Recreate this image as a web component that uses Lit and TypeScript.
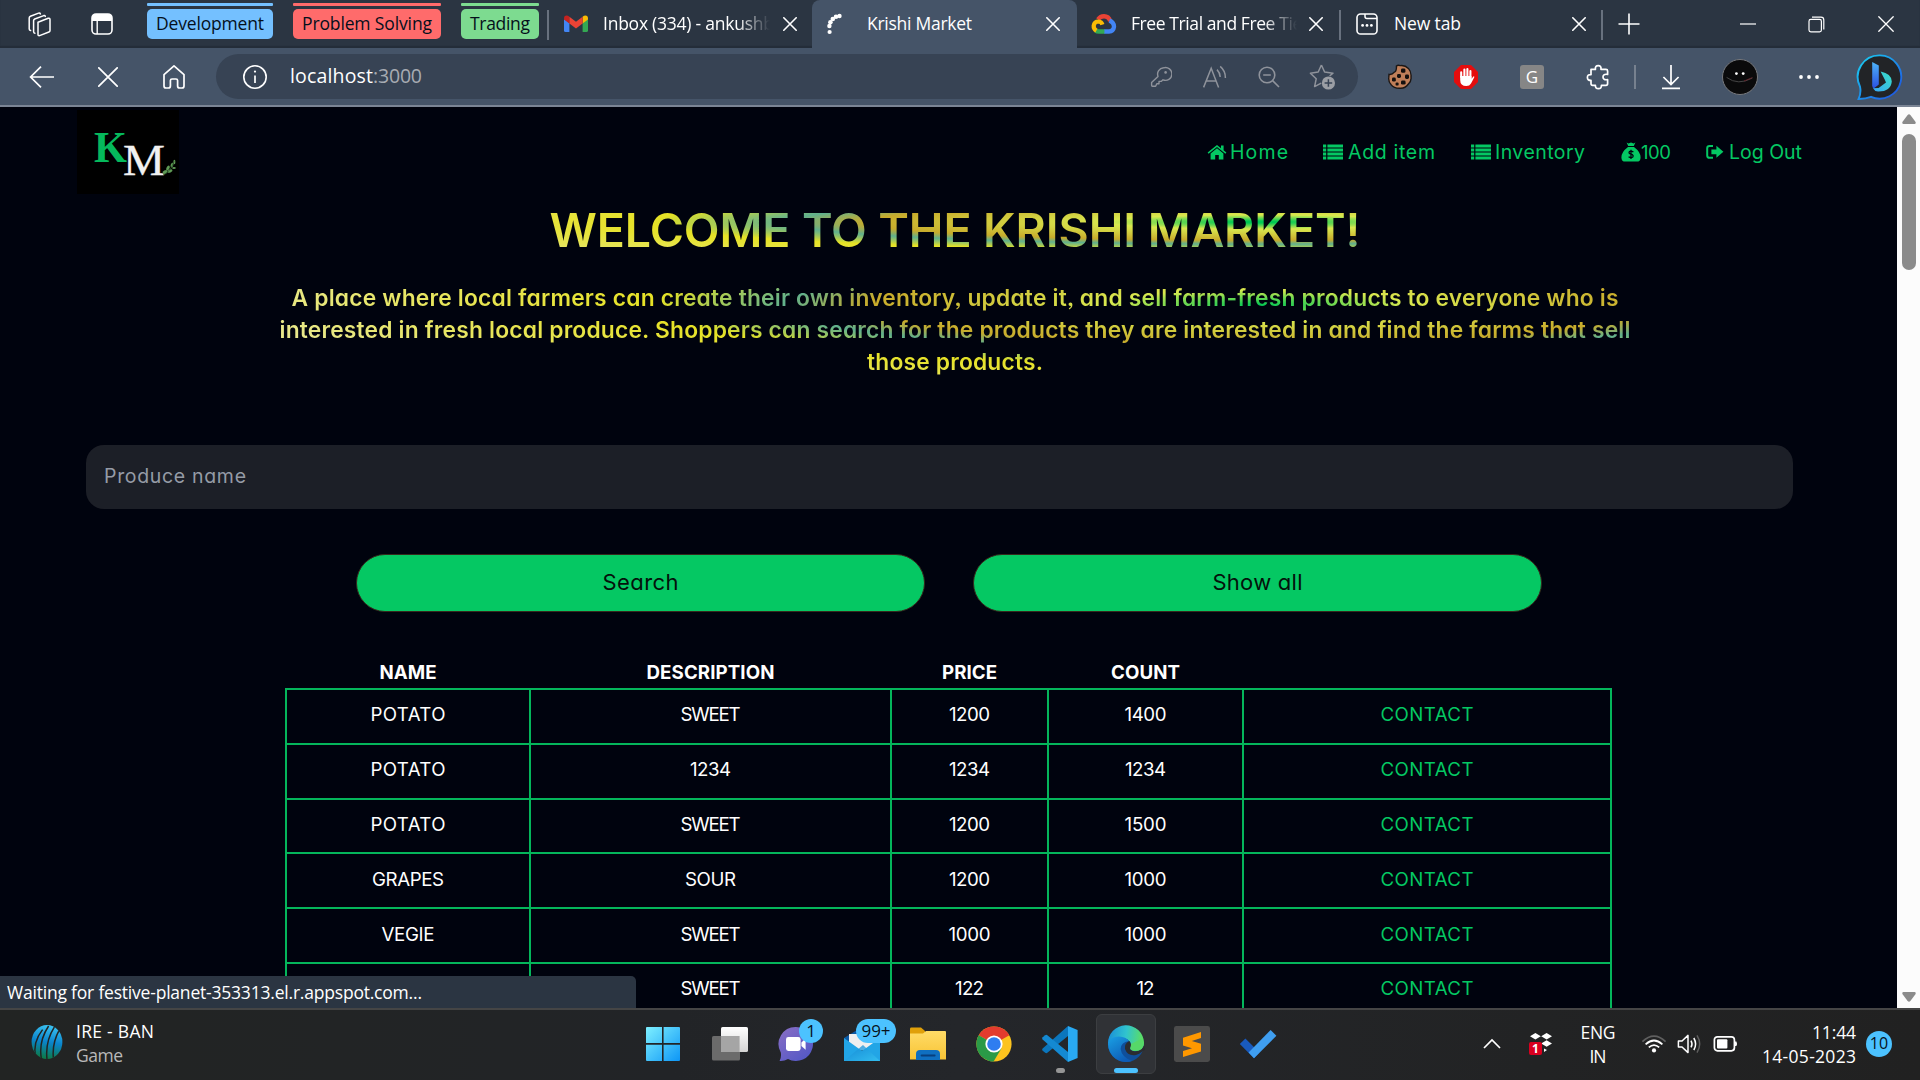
import { LitElement, html, css, svg, TemplateResult } from "lit";
import { customElement } from "lit/decorators.js";

/** Wraps an svg body; every icon is drawn in its own pixel grid. */
const icon = (w: number, h: number, body: TemplateResult | unknown) =>
  html`<svg class="ic" width=${w} height=${h} viewBox="0 0 ${w} ${h}" fill="none">${body}</svg>`;

/** A run of text that is tracked to a known advance width. */
const run = (text: string, width: number, cls = "") =>
  html`<span class="run ${cls}" data-w=${width}>${text}</span>`;

const workspaces = icon(26, 26, svg`<g stroke="#fff" stroke-width="1.5" stroke-linejoin="round" stroke-linecap="round">
  <path d="M12 11.2 22.2 7.3Q24 6.8 24 8.6V19.4Q24 20.6 22.9 21L13.6 24.6Q12 25 12 23.4Z"/>
  <path d="M8.9 22.3Q7.6 22.3 7.6 20.6V9.6Q7.6 8.5 8.7 8L17.8 4.6Q19 4.3 19.3 5.4"/>
  <path d="M4.6 19.6Q3.2 19.4 3.2 18V7Q3.2 5.8 4.4 5.3L12.6 2.1Q14 1.7 14.4 2.9"/></g>`);
const tabPanel = icon(24, 24, svg`<rect x="2" y="2" width="20" height="20" rx="4" stroke="#fff" stroke-width="1.6"/>
  <path d="M2 9V6Q2 2 6 2H18Q22 2 22 6V9Z" fill="#fff"/><path d="M7.2 8V22" stroke="#fff" stroke-width="1.4"/>`);
const gmail = icon(24, 18, svg`<path d="M0 4V15.5Q0 17 1.6 17H5.4V8Z" fill="#4285f4"/>
  <path d="M24 4V15.5Q24 17 22.4 17H18.6V8Z" fill="#34a853"/>
  <path d="M0 3.5Q0 .5 2.6.5 4 .5 5.4 1.8V8.6L0 4.6Z" fill="#c5221f"/>
  <path d="M24 3.5Q24 .5 21.4.5 20 .5 18.6 1.8V8.6L24 4.6Z" fill="#fbbc04"/>
  <path d="M5.4 1.8 12 6.8 18.6 1.8V8.6L12 13.6 5.4 8.6Z" fill="#ea4335"/>`);
const cloud = icon(26, 20, svg`<path d="M7 5.6Q9.3 2.2 13 2.2 17.6 2.2 19.2 7" stroke="#ea4335" stroke-width="4.4"/>
  <path d="M18.4 6.6Q23 8.2 23 12.8 22.4 17.4 18 17.5H13" stroke="#4285f4" stroke-width="4.4"/>
  <path d="M13.4 17.5H8Q5.8 17.5 4.6 16.5" stroke="#34a853" stroke-width="4.4"/>
  <path d="M5.4 16.6Q2.4 14.8 2.7 11.6 3.4 7.4 7.6 7.5 10.6 7.8 11.4 10.6" stroke="#fbbc04" stroke-width="4.2"/>`);
const spinner = icon(20, 24, svg`<g fill="#fff"><circle cx="14.5" cy="4" r="2.2"/><circle cx="11" cy="4.8" r="2.3"/>
  <circle cx="7.8" cy="7" r="2.3"/><circle cx="5.4" cy="10.2" r="2.3"/><circle cx="4.4" cy="14" r="2.2"/><circle cx="4.6" cy="20" r="2.1"/></g>`);
const newTab = icon(24, 24, svg`<rect x="2" y="2" width="20" height="20" rx="3.6" stroke="#fff" stroke-width="1.6"/>
  <path d="M10 2V4.4Q10 6.4 12 6.4H22" stroke="#fff" stroke-width="1.5"/><g fill="#fff"><circle cx="7.6" cy="13.4" r="1.4"/><circle cx="12" cy="13.4" r="1.4"/><circle cx="16.4" cy="13.4" r="1.4"/></g>`);
const cross = (s: number, w: number) => icon(s, s, svg`<path d="M.8.8 ${s - .8} ${s - .8}M${s - .8}.8 .8 ${s - .8}" stroke="#fff" stroke-width=${w} stroke-linecap="round"/>`);
const plus = icon(22, 22, svg`<path d="M11 .5V21.5M.5 11H21.5" stroke="#fff" stroke-width="1.6"/>`);
const minimise = icon(16, 16, svg`<path d="M0 8H16" stroke="#fff" stroke-width="1.2"/>`);
const restore = icon(17, 17, svg`<rect x="1" y="3.4" width="12.4" height="12.4" rx="1.8" stroke="#fff" stroke-width="1.2"/>
  <path d="M4 1.2H13Q15.8 1.2 15.8 4V13.4" stroke="#fff" stroke-width="1.2"/>`);

const back = icon(26, 24, svg`<path d="M25 12H2M12 1.6 1.6 12 12 22.4" stroke="#fff" stroke-width="1.7"/>`);
const home = icon(24, 26, svg`<path d="M2 10.6 12 1.8 22 10.6V22Q22 24 20 24H17.6Q15.6 24 15.6 22V16.6Q15.6 15 14 15H10Q8.4 15 8.4 16.6V22Q8.4 24 6.4 24H4Q2 24 2 22Z" stroke="#fff" stroke-width="1.7" stroke-linejoin="round"/>`);
const info = icon(26, 26, svg`<circle cx="13" cy="13" r="11.2" stroke="#fff" stroke-width="1.6"/><path d="M13 11.4V19" stroke="#fff" stroke-width="1.7"/><circle cx="13" cy="7.6" r="1.1" fill="#fff"/>`);
const key = icon(22, 22, svg`<path d="M13.6 1.8A6.4 6.4 0 1 1 13 13.8L11.2 15.4H9V17.8H6.8L5.6 20.2H2.4Q1.6 20.2 1.6 19.2V16.6L8 10.4A6.4 6.4 0 0 1 13.6 1.8Z" stroke="#8f939b" stroke-width="1.4" stroke-linejoin="round"/><circle cx="15.6" cy="6.4" r="1.3" fill="#8f939b"/>`);
const readAloud = icon(26, 24, svg`<g stroke="#8f939b" stroke-width="1.5"><path d="M1.6 22.4 9.2 3.2 16.6 22.4M4.2 16H14"/><path d="M15 4.6Q18 7.6 18.2 12M18.2 1.4Q23.6 6 23.4 13"/></g>`);
const zoomOut = icon(24, 24, svg`<g stroke="#8f939b" stroke-width="1.6"><circle cx="10" cy="10" r="7.8"/><path d="M6.2 10H13.8M15.6 15.6 22 22"/></g>`);
const star = icon(28, 27, svg`<path d="M12.4 2 15.6 9 24 10.2 20.6 13M12.4 2 9.2 9 1.4 10.2 7.2 15.8 5.6 23.6 12.2 20.2" stroke="#8f939b" stroke-width="1.5" stroke-linejoin="round"/>
  <circle cx="19.4" cy="20" r="6.6" fill="#9b9ea4"/><path d="M19.4 16.2V23.8M15.6 20H23.2" stroke="#374354" stroke-width="1.5"/>`);
const cookie = icon(26, 26, svg`<path d="M9.4 2Q11 .6 13.4 1.6 18 1 21.4 4.4 24.6 8 24 13 24.6 17 21.4 20 18 24.6 13 24.2 7 24.4 4 20.6 1.2 17.6 1.8 13.4L2 10.4Q5.4 10.8 7 8.4 9.8 7.6 9.4 2Z" fill="#c07f59" stroke="#1c1715" stroke-width="1.4"/>
  <g fill="#15100e"><rect x="14" y="4.4" width="4.4" height="4.4" rx="1.4"/><rect x="10" y="10" width="4" height="4" rx="1.4"/><rect x="18" y="10.4" width="4" height="4.6" rx="1.4"/><rect x="5" y="13.6" width="3.8" height="4" rx="1.4"/><rect x="14" y="16.6" width="4.6" height="4" rx="1.4"/><rect x="8.6" y="18.4" width="3" height="3.2" rx="1.2"/></g>`);
const stopHand = icon(26, 26, svg`<path d="M8 1H18L25 8V18L18 25H8L1 18V8Z" fill="#e40d0d"/>
  <path d="M8.2 8.2V13M11.4 5.6V13M14.4 5V13M17.4 7V14" stroke="#fff" stroke-width="2.1" stroke-linecap="round"/>
  <path d="M7.2 12H18.5V14.8L20.4 12.4Q21.6 12 21.2 13.4L18 19.4Q16.6 22 13.4 22 7.2 22 7.2 16Z" fill="#fff"/>`);
const puzzle = icon(24, 26, svg`<path d="M5 5.4H9.4Q9 1.6 12.2 1.6 15.4 1.6 15 5.4H20Q21.6 5.4 21.6 7V10.4Q17 9.6 17 13 17 16.4 21.6 15.6V19.6Q21.6 21.4 20 21.4H15.4Q15.6 24.6 12.4 24.6 9.2 24.6 9.4 21.4H6.6Q5 21.4 5 19.8V16.4Q1.4 16.6 1.4 13.4 1.4 10.4 5 10.6Z" stroke="#fff" stroke-width="1.7" stroke-linejoin="round"/>`);
const download = icon(20, 26, svg`<path d="M10 1V20M2.4 13 10 20.6 17.6 13M1 24.4H19" stroke="#fff" stroke-width="1.7"/>`);
const avatar = icon(36, 36, svg`<circle cx="18" cy="18" r="17.5" fill="#0a0a0b" stroke="#77797d"/><circle cx="14.4" cy="14.6" r="1.4" fill="#fff"/><circle cx="21.2" cy="14.6" r="1.4" fill="#fff"/>
  <path d="M4.6 18.4Q16 27 30.4 19" stroke="#4c4c4c" stroke-width=".9"/><path d="M22 22 30.4 18.6" stroke="#6c2229" stroke-width=".8"/>`);
const dots = icon(22, 6, svg`<g fill="#fff"><circle cx="3" cy="3" r="1.9"/><circle cx="11" cy="3" r="1.9"/><circle cx="19" cy="3" r="1.9"/></g>`);
const bing = icon(48, 48, svg`<defs><linearGradient id="br" x1="0" y1="0" x2="1" y2="1"><stop stop-color="#19d3f2"/><stop offset="1" stop-color="#1f4be0"/></linearGradient>
  <linearGradient id="bb" x1="0" y1="0" x2="0" y2="1"><stop stop-color="#4eb4f8"/><stop offset="1" stop-color="#2a50e2"/></linearGradient>
  <linearGradient id="bc" x1="1" y1="0" x2="0" y2="1"><stop stop-color="#38e0c4"/><stop offset="1" stop-color="#39a7f6"/></linearGradient></defs>
  <path d="M24 2.4A21.6 21.6 0 1 1 15 43.8Q10 45.8 2.6 46Q5.4 39.6 4 33.6A21.6 21.6 0 0 1 24 2.4Z" fill="#222427" stroke="url(#br)" stroke-width="1.9"/>
  <path d="M16.2 9 22.8 12.4V31.4L17.6 35.4Q16.2 34.6 16.2 32.4Z" fill="url(#bb)"/>
  <path d="M24.6 18.4Q35.6 20.4 35.8 28.6 34.8 38.8 22 38.6 18.4 38 17 35.2L22.6 35 30 29.6 28.6 26.2Z" fill="url(#bc)"/>`);

const faHome = icon(20, 16, svg`<path d="M10 1 .6 8.6 1.6 9.8 10 3 18.4 9.8 19.4 8.6 16.6 6.3V1.6H14V4.2Z" fill="#04c863"/><path d="M10 4.2 3.6 9.4V15.4H8.2V11H11.8V15.4H16.4V9.4Z" fill="#04c863"/>`);
const faList = icon(20, 16, svg`<g fill="#04c863"><path d="M0 .6H3.2V3.6H0zM4.4 .6H20V3.6H4.4zM0 4.6H3.2V7.6H0zM4.4 4.6H20V7.6H4.4zM0 8.6H3.2V11.6H0zM4.4 8.6H20V11.6H4.4zM0 12.6H3.2V15.6H0zM4.4 12.6H20V15.6H4.4z"/></g>`);
const faBag = icon(20, 20, svg`<path d="M5.6.6 7.4 1.4 10 .6 12.6 1.4 14.4.6 12.8 4H7.2ZM7 5H13Q19.6 10 19.6 15.4 19.6 19.6 15.6 19.6H4.4Q.4 19.6.4 15.4.4 10 7 5Z" fill="#04c863"/>
  <path d="M12.4 10Q10 8.4 8.4 9.6 7.2 11.6 10 12.2 13 13 11.8 15 10 16.4 7.6 14.8M10 7.8V17" stroke="#00030e" stroke-width="1.3"/>`);
const faOut = icon(18, 16, svg`<path d="M7 1.9H3.6Q1.2 1.9 1.2 4.2V11.4Q1.2 13.8 3.6 13.8H7" stroke="#04c863" stroke-width="2"/><path d="M5.4 5.4H10.4V1.8L17.4 7.8 10.4 13.8V10.2H5.4Z" fill="#04c863"/>`);

const kmLogo = html`<svg class="logo" width="102" height="84" viewBox="0 0 102 84">
  <rect width="102" height="84" fill="#000"/>
  <text x="17" y="52" textLength="33" lengthAdjust="spacingAndGlyphs" font-family="Liberation Serif, serif" font-weight="700" font-size="45" fill="#05b95c">K</text>
  <text x="46" y="64.5" textLength="42" lengthAdjust="spacingAndGlyphs" font-family="Liberation Serif, serif" font-size="45" fill="#f1f1f1" stroke="#f1f1f1" stroke-width=".3">M</text>
  <g fill="#5f9a55"><ellipse cx="88" cy="62" rx="2.6" ry="1.6" transform="rotate(-30 88 62)"/><ellipse cx="91" cy="58" rx="2.6" ry="1.5" transform="rotate(-60 91 58)"/><ellipse cx="93" cy="61" rx="2.6" ry="1.5" transform="rotate(-20 93 61)"/><ellipse cx="95" cy="55" rx="2.4" ry="1.3" transform="rotate(-70 95 55)"/><ellipse cx="97" cy="58" rx="1.8" ry="1.1"/><ellipse cx="97.4" cy="52" rx="1" ry="2.2"/></g>
  <path d="M86 65Q94 62 97 51" stroke="#2f5a2d" stroke-width=".8" fill="none"/></svg>`;

const cricket = icon(32, 36, svg`<defs><linearGradient id="cr" gradientUnits="userSpaceOnUse" x1="20" y1="2" x2="14" y2="34"><stop stop-color="#39c0f0"/><stop offset=".5" stop-color="#0a84cc"/><stop offset="1" stop-color="#0d7a4a"/></linearGradient>
  <clipPath id="cc"><ellipse cx="16" cy="18" rx="15.4" ry="17"/></clipPath></defs>
  <g clip-path="url(#cc)"><rect width="32" height="36" fill="url(#cr)"/>
  <g stroke="#222423" stroke-width="1.5"><path d="M4.6 33Q1.6 18 11.6 5.6"/><path d="M10.6 36Q7 18 17.6 2"/><path d="M16.2 37Q13.6 18 23.6 2.6"/><path d="M22.6 36Q20.4 20 28.6 5.4"/></g></g>`);
const start = icon(36, 36, svg`<defs><linearGradient id="ws" x1="0" y1="0" x2="1" y2="1"><stop stop-color="#7ef0ff"/><stop offset="1" stop-color="#0d96f6"/></linearGradient></defs>
  <path d="M2 1H17V17H1V2Q1 1 2 1ZM18.6 1H34Q35 1 35 2V17H18.6ZM1 18.8H17V35H2Q1 35 1 34ZM18.6 18.8H35V34Q35 35 34 35H18.6Z" fill="url(#ws)"/>`);
const taskView = icon(38, 36, svg`<defs><linearGradient id="tv" x1="0" y1="0" x2="0" y2="1"><stop stop-color="#fff"/><stop offset="1" stop-color="#d4d4d4"/></linearGradient></defs>
  <rect x="1" y="10" width="28" height="24.6" rx="1.6" fill="#6b6b6b"/><rect x="10" y="1" width="27" height="25" rx="1.6" fill="url(#tv)"/><path d="M10 10H28.6V26H11.6Q10 26 10 24.4Z" fill="#a5a5a5"/>`);
const chat = icon(36, 36, svg`<defs><linearGradient id="ch" x1="0" y1="0" x2=".8" y2="1"><stop stop-color="#8a6ec4"/><stop offset="1" stop-color="#5358c6"/></linearGradient></defs>
  <path d="M18 1A17 17 0 1 1 10 33Q6 35.4 1.6 35Q3.6 31 2.8 26.4A17 17 0 0 1 18 1Z" fill="url(#ch)"/><rect x="8" y="11" width="14.6" height="14" rx="2.4" fill="#fff"/><path d="M23.4 16.6 27.6 12.4V23.8L23.4 20Z" fill="#fff"/>`);
const mail = icon(38, 36, svg`<defs><linearGradient id="ml" x1="0" y1="0" x2="1" y2="1"><stop stop-color="#0f7fd0"/><stop offset="1" stop-color="#38c5f2"/></linearGradient></defs>
  <path d="M1 12 19 1 37 12V18H1Z" fill="#0c59a4"/><path d="M6 8H32V24H6Z" fill="#efefef"/><path d="M1 12 19 25 37 12V35H1Z" fill="#22a5e6"/><path d="M1 35 20 19 37 35Z" fill="url(#ml)" opacity=".75"/>`);
const folder = icon(38, 34, svg`<defs><linearGradient id="fo" x1="0" y1="0" x2="0" y2="1"><stop stop-color="#ffdb67"/><stop offset="1" stop-color="#f8c435"/></linearGradient></defs>
  <path d="M1 2Q1 .6 2.4.6H12L16 4V12H1Z" fill="#e0a00a"/><path d="M1 6.6H14L17 4H36Q37 4 37 5V32.6H1Z" fill="url(#fo)"/><path d="M7 33V27Q7 23 11 23H27Q31 23 31 27V33Z" fill="#0f6fc0"/><rect x="11.6" y="27.4" width="15" height="2" rx="1" fill="#083f7c"/>`);
const chrome = icon(36, 36, svg`<circle cx="18" cy="18" r="17.6" fill="#fcc31e"/><path d="M18 18 2.7 9.3A17.6 17.6 0 0 1 33.3 9.3Z" fill="#e33b2e"/>
  <path d="M2.7 9.3A17.6 17.6 0 0 0 17.6 35.6L25.4 22.4 18 18Z" fill="#2a9a47"/><circle cx="18" cy="18" r="8.6" fill="#fff"/><circle cx="18" cy="18" r="6.8" fill="#2f7df0"/>`);
const vscode = icon(38, 38, svg`<path d="M27 1 36.6 5V33L27 37Z" fill="#29a9f2"/><path d="M27 1V11L6 28Q5 28.4 4.2 27.8L1.4 25.4Q.8 24.4 1.6 23.6Z" fill="#0b76bd"/><path d="M27 37V27L6 10Q5 9.6 4.2 10.2L1.4 12.6Q.8 13.6 1.6 14.4Z" fill="#1489d2"/>`);
const edge = icon(38, 38, svg`<defs><linearGradient id="ea" x1="0" y1=".3" x2="1" y2=".4"><stop stop-color="#1a8fd8"/><stop offset=".5" stop-color="#30c3cf"/><stop offset="1" stop-color="#5fe05a"/></linearGradient>
  <linearGradient id="eb" x1="0" y1="0" x2=".6" y2="1"><stop stop-color="#1aa0e4"/><stop offset="1" stop-color="#0d5cb6"/></linearGradient></defs>
  <circle cx="19" cy="19" r="18" fill="#0f4f9b"/><path d="M1 19A18 18 0 0 1 37 17.6Q37 26 28 26 22.4 25.4 23.4 22.6 25.6 18 20.6 14.4 12 10 1 19Z" fill="url(#ea)"/>
  <path d="M1 19Q3 11.6 12 11.6 19 12 22 16 14 17 13.6 24 14.6 32 25 36A18 18 0 0 1 1 19Z" fill="url(#eb)"/><path d="M22.4 16Q17 18.6 18 24 20.6 31.4 29 30 32.6 29 34.6 27Q35.8 26 38 25L37 20Q35 26 28 26.4 22 25.6 23.4 22.6 25 19.6 22.4 16Z" fill="#2b2d30"/><path d="M37 17.6Q37 26 28 26 22.4 25.4 23.4 22.6 24 21 24 19L34 14Z" fill="#56d868"/>`);
const sublime = icon(38, 38, svg`<rect x="1" y="1" width="36" height="36" rx="2.4" fill="#4b4b4b"/><path d="M28 7 10 12.8V20.4L19 23.2 10 26V32L28 26.4V18.8L18.8 16 28 13Z" fill="#ff9800"/>`);
const todo = icon(38, 30, svg`<path d="M6.4 9.4.8 15 15 29.2 20.4 23.4Z" fill="#195abd"/><path d="M9.6 23.6 31.6 1 37.4 6.8 15 29.2Z" fill="#3f9ef0"/>`);

const caret = icon(20, 12, svg`<path d="M2 10 10 2 18 10" stroke="#fff" stroke-width="1.7"/>`);
const dropbox = icon(26, 26, svg`<g fill="#fff"><path d="M7.4 2 12.8 5.2 7.4 8.4 2 5.2ZM18.6 2 24 5.2 18.6 8.4 13.2 5.2ZM18.6 9.2 24 12.6 18.6 15.8 13.2 12.6ZM16 17.6 19 19 16 21Z"/></g><rect x="1" y="11" width="13" height="13" rx="2" fill="#d9001f"/>
  <text x="7.4" y="21.8" text-anchor="middle" font-family="Open Sans, sans-serif" font-weight="700" font-size="12" fill="#fff">1</text>`);
const wifi = icon(26, 20, svg`<g stroke-width="1.7"><path d="M1.4 7.6Q13-3.4 24.6 7.6" stroke="#5f5f5f"/><path d="M4.6 10.4Q13 2.6 21.4 10.4M7.8 13.4Q13 8.8 18.2 13.4" stroke="#fff"/></g><circle cx="13" cy="16.4" r="2.1" fill="#fff"/>`);
const volume = icon(26, 22, svg`<path d="M1.4 8H5L11 2.4V19.6L5 14H1.4Z" stroke="#fff" stroke-width="1.5" stroke-linejoin="round"/><path d="M14 7.6Q16 11 14 14.4M16.8 5Q20.4 11 16.8 17" stroke="#fff" stroke-width="1.5"/><path d="M20 2.4Q25.4 11 20 19.6" stroke="#5f5f5f" stroke-width="1.5"/>`);
const battery = icon(26, 18, svg`<rect x="1.4" y="1.8" width="20" height="14" rx="3" stroke="#fff" stroke-width="1.7"/><rect x="4" y="4.2" width="10.4" height="9.2" rx="1" fill="#fff"/><path d="M22 6.6H23.4Q24.6 8.8 23.4 11H22Z" fill="#fff"/>`);

type Cell = [string, number];
const HEAD: Cell[] = [["NAME", 57], ["DESCRIPTION", 128], ["PRICE", 55], ["COUNT", 69], ["", 0]];
const ROWS: Cell[][] = [
  [["POTATO", 75], ["SWEET", 60], ["1200", 41], ["1400", 42]],
  [["POTATO", 75], ["1234", 41], ["1234", 41], ["1234", 41]],
  [["POTATO", 75], ["SWEET", 60], ["1200", 41], ["1500", 42]],
  [["GRAPES", 72], ["SOUR", 51], ["1200", 41], ["1000", 42]],
  [["VEGIE", 53], ["SWEET", 60], ["1000", 42], ["1000", 42]],
  [["", 0], ["SWEET", 60], ["122", 29], ["12", 18]],
];

@customElement("app-root")
export class AppRoot extends LitElement {
  static styles = css`
    :host { display: block; width: 1920px; height: 1080px; overflow: hidden; font-family: "Open Sans", "Noto Sans", sans-serif; font-size: 17.5px; color: #fff; background: #00030e; }
    * { box-sizing: border-box; }
    .ic, .logo { display: block; flex: none; }
    .run { white-space: nowrap; display: inline-block; }
    .screen { display: flex; flex-direction: column; height: 1080px; }

    .tabs { height: 48px; flex: none; background: #2b3542; display: flex; align-items: stretch; box-shadow: inset 0 -2px 1px #242d39; }
    .cell { display: flex; align-items: center; justify-content: center; flex: none; }
    .work { width: 52px; padding-left: 26px; justify-content: flex-start; }
    .pane { width: 95px; padding-left: 38px; justify-content: flex-start; }
    .group { flex: none; height: 39px; display: flex; flex-direction: column; gap: 3px; padding-top: 3px; margin-right: 20px; color: #05101c; }
    .group .line { height: 3px; border-radius: 1px; background: currentColor; }
    .group .pill { height: 30px; border-radius: 5px; display: flex; justify-content: center; align-items: center; line-height: 24px; padding-bottom: 2px; }
    .blue { width: 126px; } .blue .line, .blue .pill { background: #74c0ff; }
    .red { width: 148px; } .red .line, .red .pill { background: #ff6b6b; }
    .green { width: 78px; margin-right: 8px; } .green .line, .green .pill { background: #7ddb90; }
    .sep { flex: none; width: 2px; height: 30px; margin-top: 10px; background: #68717e; }
    .tab { flex: none; display: flex; align-items: center; height: 48px; }
    .tab .label { flex: none; overflow: hidden; white-space: nowrap; line-height: 28px; padding-bottom: 2px; }
    .fade { -webkit-mask-image: linear-gradient(90deg, #000 80%, transparent 100%); mask-image: linear-gradient(90deg, #000 80%, transparent 100%); }
    .t1 { width: 263px; padding-left: 15px; } .t1 .label { width: 167px; margin: 0 13px 0 15px; }
    .t2 { width: 265px; padding-left: 13px; background: #455468; border-radius: 8px 8px 0 0; } .t2 .label { width: 160px; margin: 0 19px 0 22px; }
    .t3 { width: 262px; padding-left: 14px; } .t3 .label { width: 166px; margin: 0 12px 0 14px; }
    .t4 { width: 260px; padding-left: 14px; } .t4 .label { width: 165px; margin: 0 13px 0 15px; }
    .add { width: 52px; }
    .controls { margin-left: auto; display: flex; padding-right: 0; }
    .controls .cell { width: 69px; }

    .bar { height: 59px; flex: none; background: #455468; border-bottom: 2px solid #7b8595; display: flex; align-items: center; padding: 0 8px 0 9px; }
    .bar .cell { width: 66px; height: 48px; }
    .address { flex: none; width: 1142px; height: 45px; margin: 0 9px; border-radius: 23px; background: #374354; display: flex; align-items: center; padding: 0 8px 0 26px; font-size: 19.5px; }
    .address .host { margin-left: 22px; flex: 1; line-height: 28px; padding-bottom: 1px; white-space: nowrap; }
    .address .cell { width: 54px; }
    .dim { color: #a7abb2; }
    .g { width: 24px; height: 24px; border-radius: 3px; background: #868686; font-size: 17px; line-height: 23px; text-align: center; }
    .rule { width: 2px; height: 24px; background: #77818f; margin: 0 2px 0 3px; }
    .right { display: flex; gap: 3px; align-items: center; }
    .right .cell:last-child { padding-left: 4px; }

    .view { flex: 1; min-height: 0; display: flex; overflow: hidden; position: relative; }
    .page { width: 1897px; height: 901px; overflow: hidden; font-family: Inter, "Open Sans", sans-serif; font-feature-settings: "cv11", "ss03"; display: flex; flex-direction: column; }
    .header { height: 88px; flex: none; padding: 3px 0 0 77px; display: flex; justify-content: space-between; }
    nav { display: flex; width: 690px; color: #04c863; font-size: 19.5px; padding-top: 28px; }
    nav .item { display: flex; align-items: center; height: 28px; }
    nav .item:nth-child(1) { width: 116px; gap: 3px; } nav .item:nth-child(2) { width: 148px; gap: 5px; } nav .item:nth-child(3) { width: 150px; gap: 4px; } nav .item:nth-child(4) { width: 85px; font-size: 18.5px; }
    nav .item:nth-child(5) { gap: 5px; height: 27px; }
    .grad { width: 1356px; margin-left: 277px; text-align: center; color: transparent; -webkit-background-clip: text; background-clip: text; flex: none; }
    h1 { font-size: 46.5px; line-height: 60px; font-weight: 600; height: 60px; margin: 5px 0 0; padding: 0;
      background-image: radial-gradient(1000px 47px at 980px 22px, #00c853 0, #00c853 2%, #d9e84f 15%, #c8ab2b 38.8%, #5fb08e 47%, #e6e225 60.5%, #e6e77c 100%); }
    p { font-size: 22.8px; line-height: 32px; font-weight: 600; margin: 22px 0 0; height: 96px;
      background-image: radial-gradient(1000px 101px at 980px 23px, #00c853 0, #d9e84f 15%, #c8ab2b 38.8%, #5fb08e 47%, #e6e225 60.5%, #e8e88a 100%); }
    p .row { display: block; height: 32px; }
    .field { flex: none; margin: 67px 0 0 86px; width: 1707px; height: 64px; border-radius: 18px; background: #1c1f27; color: #959ba6; display: flex; align-items: center; padding: 0 18px 3px; font-size: 19.5px; }
    .buttons { flex: none; display: flex; gap: 48px; margin: 45px 0 0 356px; }
    .btn { width: 569px; height: 58px; border-radius: 29px; background: #05c863; border: 1px solid #35291c; color: #04120b; font-size: 22px; display: flex; align-items: center; justify-content: center; padding-bottom: 2px; }
    .table { flex: none; width: 1327px; margin: 50px 0 0 285px; font-size: 18.7px; }
    .tr { display: grid; grid-template-columns: 244px 361px 157px 195px 370px; height: 54.8px; border-top: 2px solid #04b65b; }
    .tr > div { border-left: 2px solid #04b65b; display: flex; align-items: center; justify-content: center; padding-bottom: 3px; }
    .tr > div:last-child { border-right: 2px solid #04b65b; color: #04c863; }
    .tr.th { height: 26px; border: 0; font-weight: 700; line-height: 22px; }
    .tr.th > div, .tr.th > div:last-child { border-color: transparent; padding: 0 0 6px; }

    .scroll { width: 23px; background: #fcfcfc; display: flex; flex-direction: column; align-items: center; justify-content: space-between; padding: 7px 0 6px; }
    .thumb { width: 14px; height: 136px; border-radius: 7px; background: #8b8b8b; margin: 10px 0 auto; }
    .status { position: absolute; left: 0; bottom: 0; width: 636px; height: 32px; background: #2b3542; border-radius: 0 5px 0 0; padding-left: 7px; line-height: 33px; }

    .task { height: 72px; flex: none; background: linear-gradient(90deg, #222423, #222427 35%, #24262a 50%, #222324 80%, #212121); border-top: 2px solid #454545; display: flex; align-items: stretch; }
    .widget { width: 631px; display: flex; align-items: center; gap: 13px; padding: 0 0 5px 31px; }
    .widget .ic { margin-top: -2px; }
    .stack { display: flex; flex-direction: column; line-height: 24px; }
    .soft { color: #b9b9b9; }
    .apps { display: flex; padding-top: 4px; }
    .app { width: 66px; height: 60px; display: flex; align-items: center; justify-content: center; position: relative; }
    .app:first-child { padding-right: 2px; }
    .active::before { content: ""; position: absolute; inset: 0 3px; border-radius: 6px; background: #303236; border: 1px solid #3c3e41; }
    .active .ic { position: relative; }
    .mark { position: absolute; bottom: 1px; width: 9px; height: 5px; border-radius: 3px; background: #959595; }
    .mark.on { width: 24px; background: #4cc2ff; }
    .badge { position: absolute; top: 5px; right: 6px; height: 24px; min-width: 24px; border-radius: 12px; background: #4cc2ff; color: #07131c; line-height: 24px; text-align: center; font-size: 17px; }
    .wide { right: -1px; min-width: 40px; }
    .tray { margin-left: auto; display: flex; align-items: center; padding-bottom: 3px; }
    .drop { margin-left: 26px; }
    .lang { align-items: center; width: 34px; margin: 0 26px 0 27px; }
    .icons { display: flex; gap: 10px; align-items: center; }
    .clock { align-items: flex-end; width: 94px; margin: 0 10px 0 23px; }
    .count { width: 26px; height: 26px; border-radius: 13px; background: #4cc2ff; color: #07131c; font-size: 16px; line-height: 25px; text-align: center; margin-right: 28px; }
  `;

  /** Tracks each marked run so that its glyphs span the width that it names. */
  protected firstUpdated() {
    this.renderRoot.querySelectorAll<HTMLElement>("[data-w]").forEach((el) => {
      const n = (el.textContent ?? "").length;
      if (n < 2) return;
      const ls = (Number(el.dataset.w) - el.getBoundingClientRect().width) / (n - 1);
      el.style.letterSpacing = ls.toFixed(3) + "px";
      el.style.marginRight = (-ls).toFixed(3) + "px";
    });
  }

  private tabs() {
    return html`<div class="tabs">
      <div class="cell work">${workspaces}</div><div class="cell pane">${tabPanel}</div>
      <div class="group blue"><div class="line"></div><div class="pill">${run("Development", 108)}</div></div>
      <div class="group red"><div class="line"></div><div class="pill">${run("Problem Solving", 130)}</div></div>
      <div class="group green"><div class="line"></div><div class="pill">${run("Trading", 60)}</div></div>
      <div class="sep"></div>
      <div class="tab t1">${gmail}<div class="label fade">${run("Inbox (334) - ankushb", 171)}</div>${cross(14, 1.6)}</div>
      <div class="tab t2">${spinner}<div class="label">${run("Krishi Market", 105)}</div>${cross(14, 1.6)}</div>
      <div class="tab t3">${cloud}<div class="label fade">${run("Free Trial and Free Tier", 178)}</div>${cross(14, 1.6)}</div>
      <div class="sep"></div>
      <div class="tab t4">${newTab}<div class="label">${run("New tab", 67)}</div>${cross(14, 1.6)}</div>
      <div class="sep"></div>
      <div class="cell add">${plus}</div>
      <div class="controls"><div class="cell">${minimise}</div><div class="cell">${restore}</div><div class="cell">${cross(16, 1.3)}</div></div>
    </div>`;
  }

  private toolbar() {
    const cell = (c: unknown) => html`<div class="cell">${c}</div>`;
    return html`<div class="bar">
      ${[back, cross(20, 1.7), home].map(cell)}
      <div class="address">${info}<div class="host">${run("localhost", 83)}${run(":3000", 49, "dim")}</div>${[key, readAloud, zoomOut, star].map(cell)}</div>
      ${[cookie, stopHand, html`<div class="g">G</div>`, puzzle].map(cell)}
      <div class="rule"></div>
      <div class="right">${[download, avatar, dots, bing].map(cell)}</div>
    </div>`;
  }

  private page() {
    return html`<div class="page">
      <div class="header">${kmLogo}
        <nav>
          <div class="item">${faHome}${run("Home", 58)}</div>
          <div class="item">${faList}${run("Add item", 87)}</div>
          <div class="item">${faList}${run("Inventory", 90)}</div>
          <div class="item">${faBag}${run("100", 30)}</div>
          <div class="item">${faOut}${run("Log Out", 73)}</div>
        </nav>
      </div>
      <h1 class="grad">${run("WELCOME TO THE KRISHI MARKET!", 811)}</h1>
      <p class="grad">
        <span class="row">${run("A place where local farmers can create their own inventory, update it, and sell farm-fresh products to everyone who is", 1327)}</span>
        <span class="row">${run("interested in fresh local produce. Shoppers can search for the products they are interested in and find the farms that sell", 1351)}</span>
        <span class="row">${run("those products.", 176)}</span>
      </p>
      <div class="field">${run("Produce name", 142)}</div>
      <div class="buttons"><div class="btn">${run("Search", 76)}</div><div class="btn">${run("Show all", 90)}</div></div>
      <div class="table">
        <div class="tr th">${HEAD.map(([t, w]) => html`<div>${run(t, w)}</div>`)}</div>
        ${ROWS.map((r) => html`<div class="tr">${r.map(([t, w]) => html`<div>${run(t, w)}</div>`)}<div>${run("CONTACT", 93)}</div></div>`)}
      </div>
    </div>`;
  }

  render() {
    return html`<div class="screen">
      ${this.tabs()}${this.toolbar()}
      <div class="view">${this.page()}
        <div class="scroll">${icon(14, 10, svg`<path d="M5.6 1Q7-.4 8.4 1L13.6 8Q14 10 12.6 10H1.4Q0 10 .4 8Z" fill="#8b8b8b"/>`)}<div class="thumb"></div>
          ${icon(14, 10, svg`<path d="M5.6 9Q7 10.4 8.4 9L13.6 2Q14 0 12.6 0H1.4Q0 0 .4 2Z" fill="#8b8b8b"/>`)}</div>
        <div class="status">${run("Waiting for festive-planet-353313.el.r.appspot.com...", 415)}</div>
      </div>
      <div class="task">
        <div class="widget">${cricket}<div class="stack">${run("IRE - BAN", 78)}<div class="soft">${run("Game", 47)}</div></div></div>
        <div class="apps">
          <div class="app">${start}</div><div class="app">${taskView}</div>
          <div class="app">${chat}<div class="badge">1</div></div>
          <div class="app">${mail}<div class="badge wide">99+</div></div>
          <div class="app">${folder}</div><div class="app">${chrome}</div>
          <div class="app">${vscode}<div class="mark"></div></div>
          <div class="app active">${edge}<div class="mark on"></div></div>
          <div class="app">${sublime}</div><div class="app">${todo}</div>
        </div>
        <div class="tray">${caret}<div class="cell drop">${dropbox}</div>
          <div class="stack lang">${run("ENG", 35)}${run("IN", 17)}</div>
          <div class="icons">${wifi}${volume}${battery}</div>
          <div class="stack clock">${run("11:44", 44)}${run("14-05-2023", 94)}</div>
          <div class="count">10</div>
        </div>
      </div>
    </div>`;
  }
}
